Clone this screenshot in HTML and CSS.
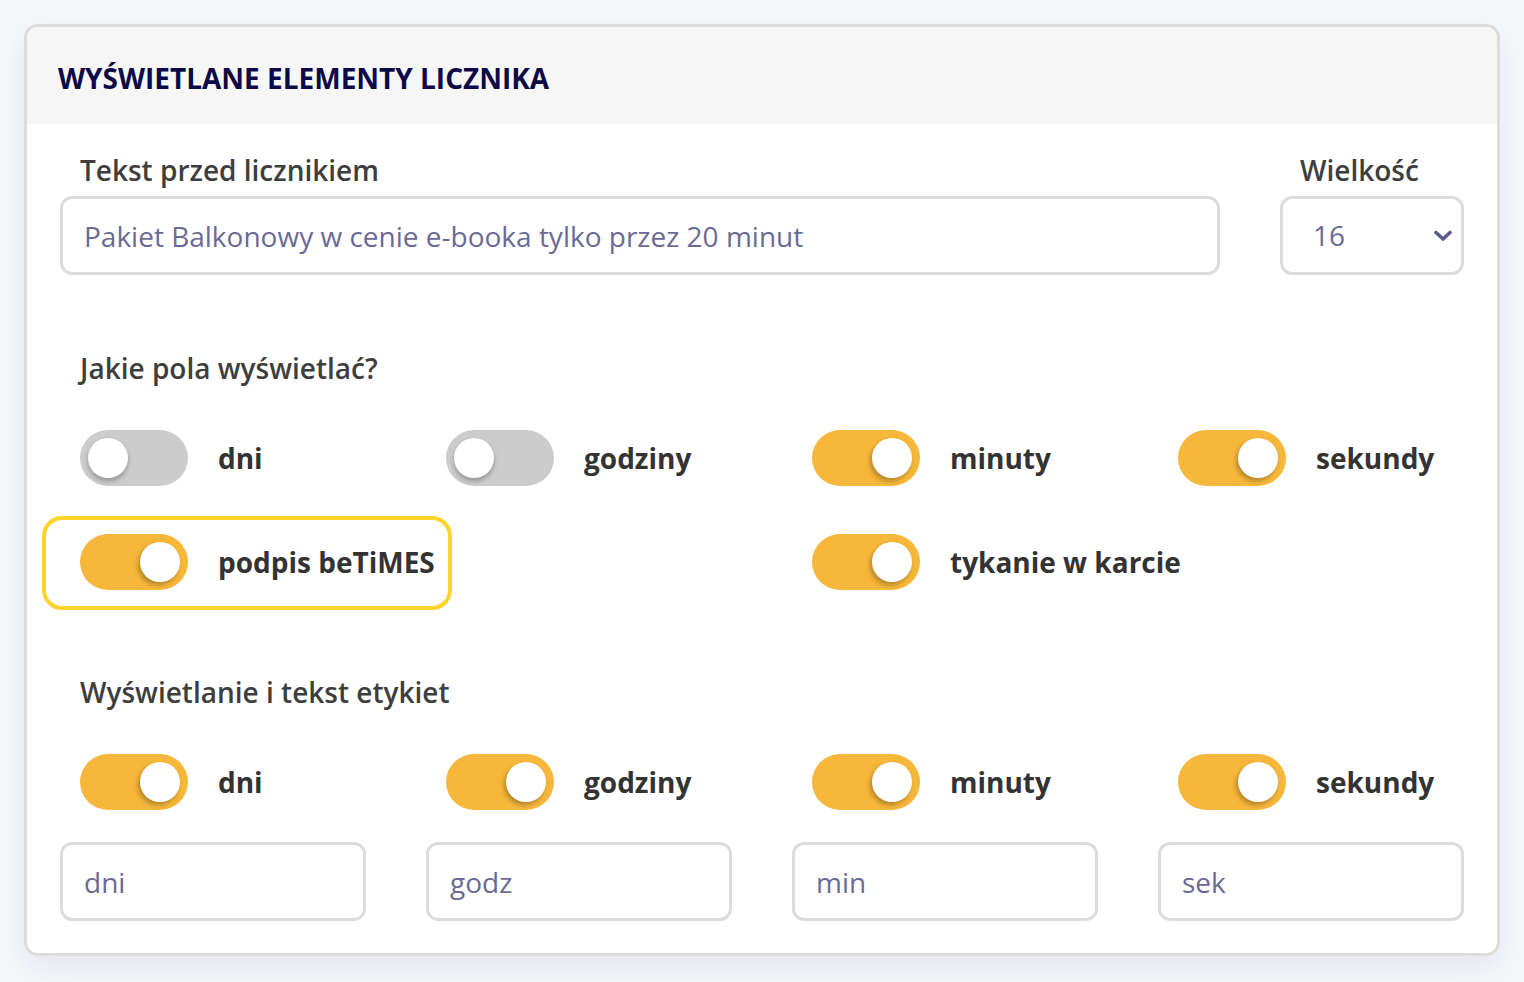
FILE: index.html
```html
<!DOCTYPE html>
<html lang="pl">
<head>
<meta charset="utf-8">
<title>Wyświetlane elementy licznika</title>
<link rel="stylesheet" href="styles.css">
</head>
<body>
<section class="card">
  <header class="card-header">
    <h2 class="card-title">WYŚWIETLANE ELEMENTY LICZNIKA</h2>
  </header>
  <div class="card-body">
    <div class="top-row">
      <div class="field">
        <label class="field-label">Tekst przed licznikiem</label>
        <input class="text-input" type="text" value="Pakiet Balkonowy w cenie e-booka tylko przez 20 minut">
      </div>
      <div class="field">
        <label class="field-label">Wielkość</label>
        <div class="select">
          <span class="select-value">16</span>
          <svg class="chevron" width="18" height="12" viewBox="0 0 18 12"><path d="M2 2.5 L9 9 L16 2.5" fill="none" stroke="#5d5b8c" stroke-width="3.6" stroke-linecap="round" stroke-linejoin="round"/></svg>
        </div>
      </div>
    </div>

    <h3 class="section-label first">Jakie pola wyświetlać?</h3>
    <div class="opt-grid">
      <div class="opt"><span class="toggle"><span class="knob"></span></span><span class="opt-label">dni</span></div>
      <div class="opt"><span class="toggle"><span class="knob"></span></span><span class="opt-label">godziny</span></div>
      <div class="opt"><span class="toggle on"><span class="knob"></span></span><span class="opt-label">minuty</span></div>
      <div class="opt"><span class="toggle on"><span class="knob"></span></span><span class="opt-label">sekundy</span></div>
      <div class="opt highlight"><span class="toggle on"><span class="knob"></span></span><span class="opt-label">podpis beTiMES</span></div>
      <div class="opt"></div>
      <div class="opt"><span class="toggle on"><span class="knob"></span></span><span class="opt-label">tykanie w karcie</span></div>
    </div>

    <h3 class="section-label second">Wyświetlanie i tekst etykiet</h3>
    <div class="opt-grid single">
      <div class="opt"><span class="toggle on"><span class="knob"></span></span><span class="opt-label">dni</span></div>
      <div class="opt"><span class="toggle on"><span class="knob"></span></span><span class="opt-label">godziny</span></div>
      <div class="opt"><span class="toggle on"><span class="knob"></span></span><span class="opt-label">minuty</span></div>
      <div class="opt"><span class="toggle on"><span class="knob"></span></span><span class="opt-label">sekundy</span></div>
    </div>
    <div class="input-grid">
      <input class="text-input" type="text" value="dni">
      <input class="text-input" type="text" value="godz">
      <input class="text-input" type="text" value="min">
      <input class="text-input" type="text" value="sek">
    </div>
  </div>
</section>
</body>
</html>
```
FILE: styles.css
```css
*, *::before, *::after { box-sizing: border-box; }
html, body { margin: 0; }
body {
  background: #f6f7fb;
  font-family: "Open Sans", "Liberation Sans", sans-serif;
  padding: 24px;
  min-height: 982px;
}
.card {
  width: 1476px;
  border: 3px solid #dcdcdc;
  border-radius: 14px;
  background: #fff;
  overflow: hidden;
  box-shadow: 0 12px 30px rgba(20, 20, 60, 0.07);
}
.card-header {
  height: 97px;
  background: #f6f6f6;
  display: flex;
  align-items: center;
  padding-left: 31px;
}
.card-title {
  margin: 0;
  font-size: 28px;
  font-weight: 700;
  color: #0d0b47;
  line-height: 36px;
  padding-top: 4px;
}
.card-body {
  padding: 28px 33px 32px 33px;
}
.top-row {
  display: grid;
  grid-template-columns: 1fr 184px;
  column-gap: 60px;
}
.field { display: flex; flex-direction: column; }
.field-label {
  font-size: 28px;
  font-weight: 600;
  color: #3e3e3e;
  line-height: 36px;
  margin: 0 0 8px 20px;
}
.text-input {
  height: 79px;
  width: 100%;
  border: 3px solid #dcdcdc;
  border-radius: 12px;
  padding: 0 21px;
  font-family: "Open Sans", "Liberation Sans", sans-serif;
  font-size: 28px;
  color: #6b6a95;
  background: #fff;
  outline: none;
}
.select {
  height: 79px;
  border: 3px solid #dcdcdc;
  border-radius: 12px;
  display: flex;
  align-items: center;
  justify-content: space-between;
  padding: 0 9px 0 30px;
}
.select-value {
  font-size: 28px;
  color: #6b6a95;
  line-height: 36px;
  padding-bottom: 2px;
}
.section-label {
  margin: 0;
  font-size: 28px;
  font-weight: 600;
  color: #3e3e3e;
  line-height: 36px;
  padding-left: 20px;
}
.section-label.first { margin-top: 75px; }
.section-label.second { margin-top: 84px; }
.opt-grid {
  display: grid;
  grid-template-columns: repeat(4, 306px);
  column-gap: 60px;
  row-gap: 48px;
  margin-top: 44px;
}
.opt {
  display: flex;
  align-items: center;
  padding-left: 20px;
  height: 56px;
  position: relative;
}
.opt.highlight::before {
  content: "";
  position: absolute;
  left: -18px;
  top: -18px;
  width: 410px;
  height: 94px;
  border: 4px solid #fdd42c;
  border-radius: 20px;
  pointer-events: none;
}
.toggle {
  flex: 0 0 auto;
  width: 108px;
  height: 56px;
  border-radius: 28px;
  background: #cccccc;
  position: relative;
  display: block;
}
.toggle.on { background: #f7b73a; }
.knob {
  position: absolute;
  top: 8px;
  left: 8px;
  width: 40px;
  height: 40px;
  border-radius: 50%;
  background: #fff;
  box-shadow: 0 3px 5px rgba(0, 0, 0, 0.28);
}
.toggle.on .knob { left: 60px; box-shadow: -2px 3px 5px rgba(0, 0, 0, 0.28); }
.opt-label {
  margin-left: 30px;
  font-size: 28px;
  font-weight: 700;
  color: #333;
  line-height: 36px;
  white-space: nowrap;
}
.input-grid {
  display: grid;
  grid-template-columns: repeat(4, 306px);
  column-gap: 60px;
  margin-top: 32px;
}
```
